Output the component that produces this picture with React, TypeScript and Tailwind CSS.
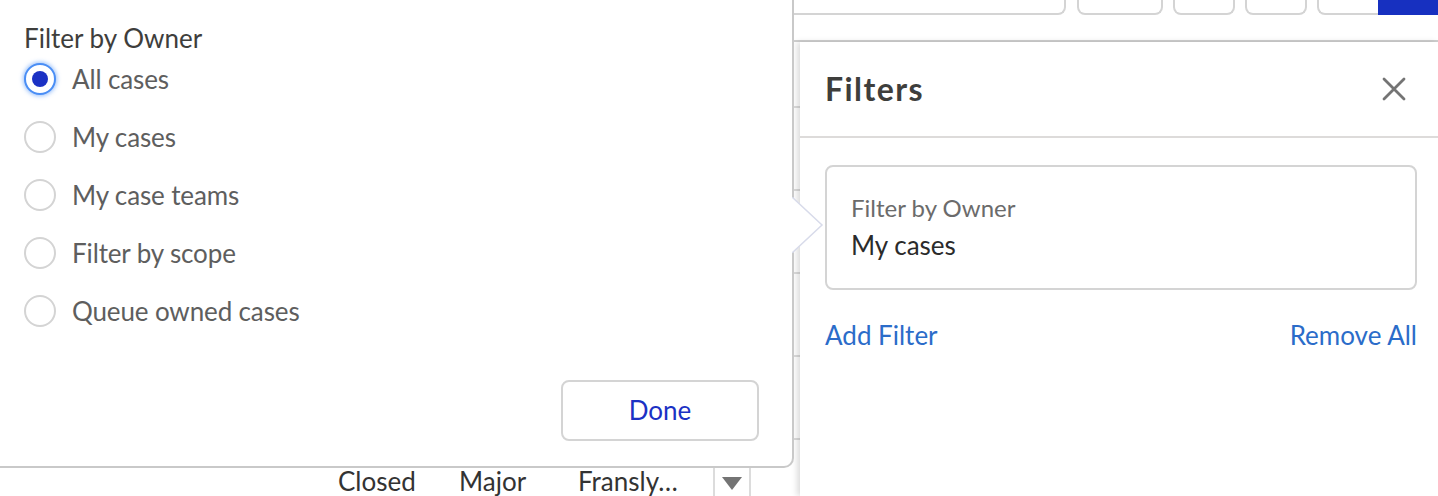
import React, { useState } from 'react';

// Pilihan filter pemilik untuk popover.
const ownerOptions = ['All cases', 'My cases', 'My case teams', 'Filter by scope', 'Queue owned cases'];

// Tombol radio bergaya Salesforce.
const Radio: React.FC<{ checked: boolean }> = ({ checked }) => (
    <span
        className={`flex items-center justify-center w-[32px] h-[32px] rounded-full border-2 bg-white ${
            checked ? 'border-[#4a8ef5] shadow-[0_0_4px_1px_rgba(70,140,245,0.55)]' : 'border-[#d4d4d4]'
        }`}
    >
        {checked && <span className="w-[16px] h-[16px] rounded-full bg-[#1b31c4]" />}
    </span>
);

// Baris latar belakang tabel (terlihat di balik popover dan panel).
const BackgroundList: React.FC = () => (
    <div className="flex flex-col">
        {/* Toolbar atas, tombolnya terpotong di tepi atas */}
        <div className="flex h-[15px] items-end justify-end gap-[10px]">
            <div className="h-[40px] w-[360px] rounded-b-[8px] border-2 border-t-0 border-[#d4d4d4] mr-[1px]" />
            <div className="h-[40px] w-[86px] rounded-b-[8px] border-2 border-t-0 border-[#d4d4d4]" />
            <div className="h-[40px] w-[62px] rounded-b-[8px] border-2 border-t-0 border-[#d4d4d4]" />
            <div className="h-[40px] w-[62px] rounded-b-[8px] border-2 border-t-0 border-[#d4d4d4]" />
            <div className="flex h-[40px]">
                <div className="w-[61px] rounded-bl-[8px] border-2 border-r-0 border-t-0 border-[#d4d4d4]" />
                <div className="w-[60px] h-[15px] self-end bg-[#1730c0]" />
            </div>
        </div>
        <div className="h-[27px] border-b-2 border-[#cfcfcf]" />
        <div className="h-[66px] border-b-2 border-[#dcdcdc]" />
        <div className="h-[83px] border-b-2 border-[#dcdcdc]" />
        <div className="h-[83px] border-b-2 border-[#dcdcdc]" />
        <div className="h-[83px] border-b-2 border-[#dcdcdc]" />
        <div className="h-[83px] border-b-2 border-[#dcdcdc]" />
        <div className="flex h-[83px] items-center pl-[338px] text-[26px] text-[#333333]">
            <span className="w-[121px]">Closed</span>
            <span className="w-[119px]">Major</span>
            <span className="w-[135px]">Fransly…</span>
            <span className="flex h-full w-[38px] justify-center border-x-2 border-[#dcdcdc] pt-[37px]">
                <svg width="20" height="13" viewBox="0 0 20 13">
                    <path d="M0 0 L20 0 L10 13 Z" fill="#747474" />
                </svg>
            </span>
        </div>
    </div>
);

export default function App() {
    // Opsi yang sedang dipilih di popover.
    const [selected, setSelected] = useState('All cases');

    return (
        <div className="relative h-[496px] w-[1438px] overflow-hidden bg-white font-['Lato',sans-serif]">
            <BackgroundList />

            {/* Panel Filters di sisi kanan */}
            <div className="absolute left-[800px] right-0 top-[42px] bottom-0 z-10 bg-white shadow-[-3px_0_6px_rgba(0,0,0,0.14)]">
                <div className="flex h-[96px] items-center justify-between border-b-2 border-[#dddbda] pl-[25px] pr-[32px]">
                    <h2 className="text-[32px] font-bold leading-none tracking-[0.045em] text-[#3e3e3c]">Filters</h2>
                    <svg width="24" height="24" viewBox="0 0 24 24">
                        <path d="M2 2 L22 22 M22 2 L2 22" stroke="#747474" strokeWidth="2.8" strokeLinecap="round" />
                    </svg>
                </div>
                <div className="ml-[25px] mr-[21px]">
                    <div className="mt-[27px] h-[125px] rounded-[8px] border-2 border-[#d4d4d4] pl-[24px] pt-[27px]">
                        <div className="text-[24px] leading-[28px] text-[#6b6b6b]">Filter by Owner</div>
                        <div className="mt-[7px] text-[26px] leading-[32px] text-[#2b2b2b]">My cases</div>
                    </div>
                    <div className="mt-[30px] flex justify-between text-[26px] leading-[30px] text-[#2b6cc9]">
                        <span>Add Filter</span>
                        <span>Remove All</span>
                    </div>
                </div>
            </div>

            {/* Popover pilihan pemilik */}
            <div className="absolute left-0 top-0 z-20 flex h-[468px] w-[794px] flex-col rounded-br-[10px] border-b-2 border-r-2 border-[#c9c9c9] bg-white pb-[25px] pl-[24px] pr-[33px]">
                <div className="pt-[24px] text-[26px] leading-[28px] text-[#3e3e3c]">Filter by Owner</div>
                <div className="-mt-[2px] flex flex-col">
                    {ownerOptions.map((opt) => (
                        <label key={opt} className="flex h-[58px] items-center gap-[16px]" onClick={() => setSelected(opt)}>
                            <Radio checked={selected === opt} />
                            <span className="text-[26px] tracking-[-0.005em] text-[#5e5e5e]">{opt}</span>
                        </label>
                    ))}
                </div>
                <div className="mt-auto flex justify-end">
                    <button className="h-[61px] w-[198px] rounded-[8px] border-2 border-[#d4d4d4] bg-white text-[26px] text-[#1b31c4]">
                        Done
                    </button>
                </div>
                {/* Nubbin yang menunjuk ke kartu filter */}
                <svg className="absolute left-[792px] top-[197px]" width="32" height="56" viewBox="0 0 32 56">
                    <path d="M0 0 L30 28 L0 56 Z" fill="#ffffff" />
                    <path d="M0 0 L30 28 L0 56" fill="none" stroke="#d8dbea" strokeWidth="1.5" />
                </svg>
            </div>
        </div>
    );
}
